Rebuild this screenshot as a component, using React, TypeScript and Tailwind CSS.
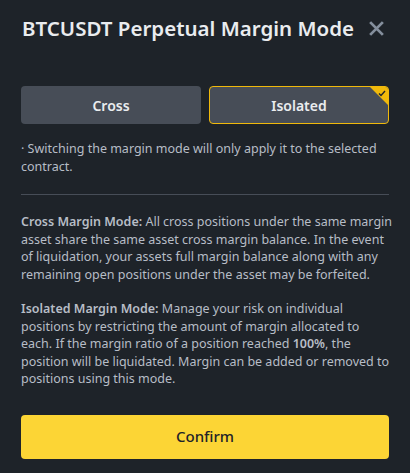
import React from "react";

export default function App() {
  return (
    <div className="w-[410px] h-[473px] bg-[#1e2329] px-[21px] pt-[15px] flex flex-col" style={{ fontFamily: "'Noto Sans', 'Liberation Sans', sans-serif" }}>
      <div className="flex items-center justify-between h-[26px] pl-[1px]">
        <h1 className="text-[20.5px] font-semibold text-[#eaecef] leading-[26px] whitespace-nowrap">BTCUSDT Perpetual Margin Mode</h1>
        <svg width="17" height="17" viewBox="0 0 16 16" className="mr-[4px]">
          <path d="M2 2 L14 14 M14 2 L2 14" stroke="#848e9c" strokeWidth="2.6" strokeLinecap="butt" />
        </svg>
      </div>
      <div className="mt-[45px] grid grid-cols-2 gap-[8px]">
        <button className="h-[38px] rounded-[4px] bg-[#474d57] text-[#eaecef] text-[14px] font-semibold">Cross</button>
        <button className="relative h-[38px] rounded-[4px] bg-[#474d57] border border-[#f0b90b] text-[#eaecef] text-[14px] font-semibold overflow-hidden">
          Isolated
          <span className="absolute top-0 right-0 w-0 h-0 border-t-[18px] border-t-[#f0b90b] border-l-[18px] border-l-transparent" />
          <svg className="absolute top-[3px] right-[2px]" width="8" height="7" viewBox="0 0 8 7">
            <path d="M1 3.5 L3 5.5 L7 1" stroke="#1e2329" strokeWidth="1.4" fill="none" />
          </svg>
        </button>
      </div>
      <p className="mt-[16px] text-[12.5px] leading-[18px] text-[#b7bdc6] whitespace-nowrap">
        · Switching the margin mode will only apply it to the selected
        <br />
        contract.
      </p>
      <div className="mt-[18px] h-px bg-[#474d57]" />
      <p className="mt-[18px] text-[12.5px] leading-[17.5px] text-[#b7bdc6] whitespace-nowrap">
        <span className="font-semibold">Cross Margin Mode:</span> All cross positions under the same margin
        <br />
        asset share the same asset cross margin balance. In the event
        <br />
        of liquidation, your assets full margin balance along with any
        <br />
        remaining open positions under the asset may be forfeited.
      </p>
      <p className="mt-[17px] text-[12.5px] leading-[17.5px] text-[#b7bdc6] whitespace-nowrap">
        <span className="font-semibold">Isolated Margin Mode:</span> Manage your risk on individual
        <br />
        positions by restricting the amount of margin allocated to
        <br />
        each. If the margin ratio of a position reached <span className="font-semibold">100%</span>, the
        <br />
        position will be liquidated. Margin can be added or removed to
        <br />
        positions using this mode.
      </p>
      <button className="mt-[27px] h-[44px] rounded-[4px] bg-[#fcd535] text-[#1e2329] text-[15px] font-medium">Confirm</button>
    </div>
  );
}
